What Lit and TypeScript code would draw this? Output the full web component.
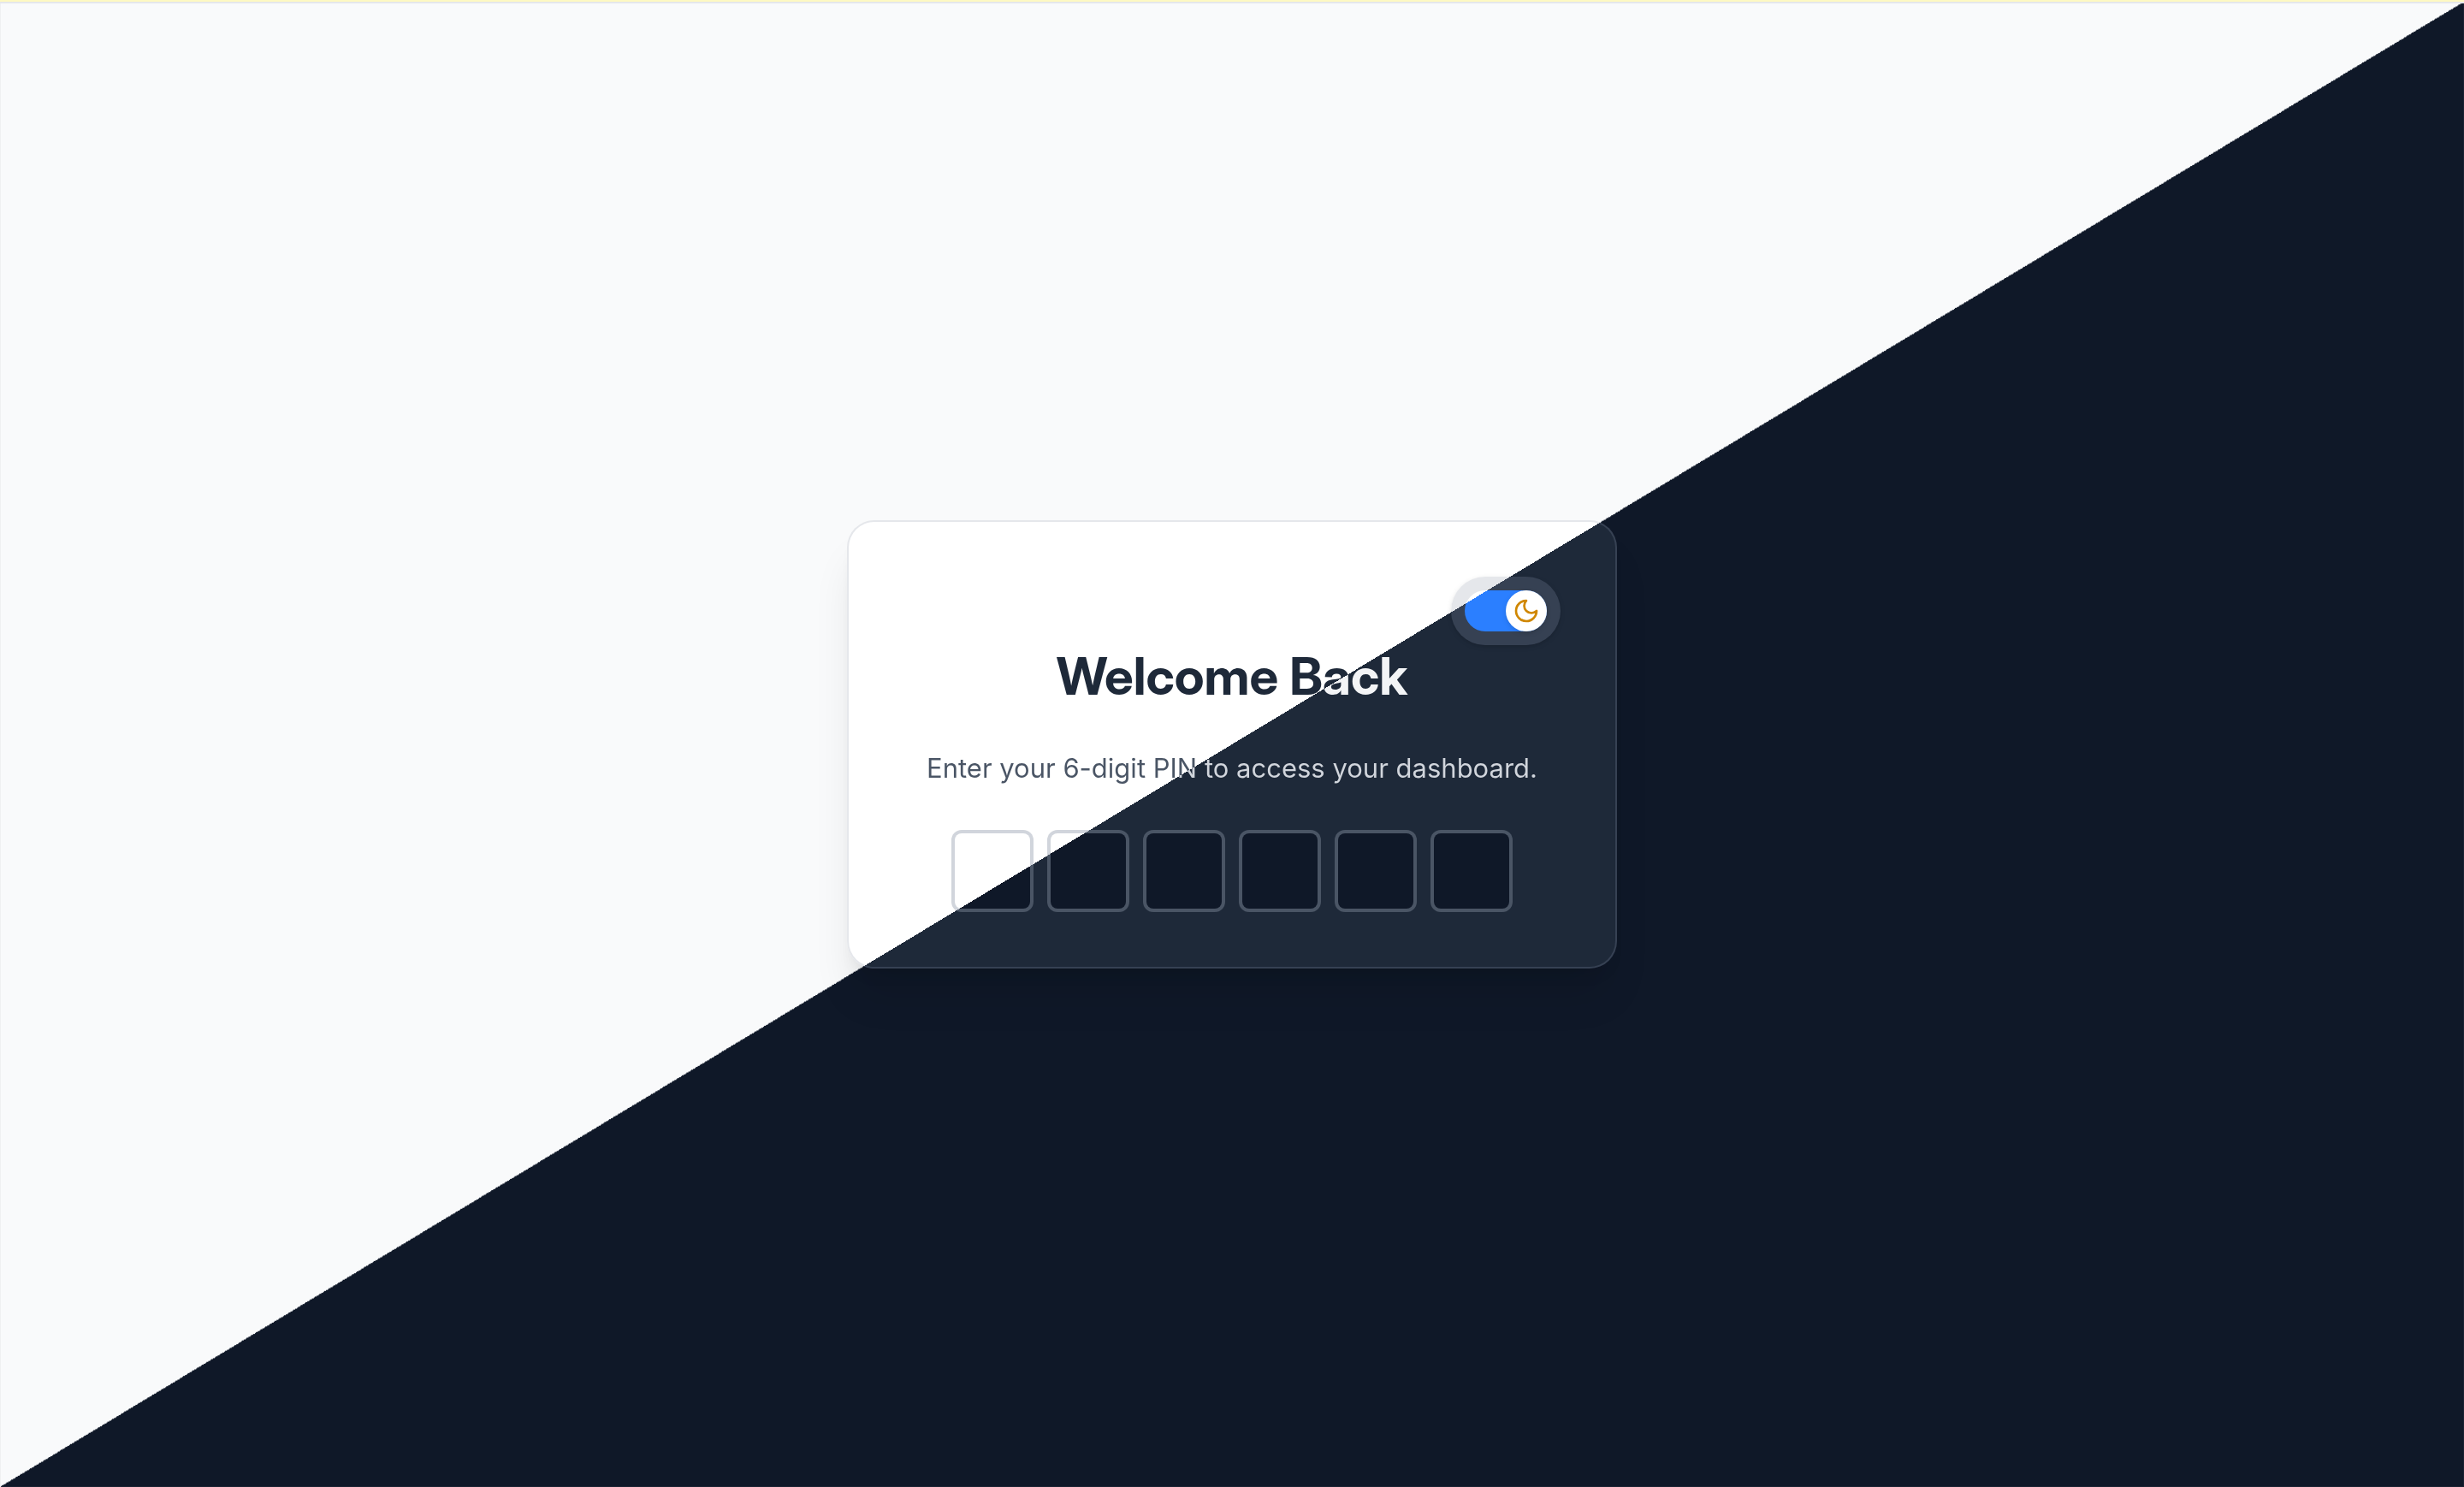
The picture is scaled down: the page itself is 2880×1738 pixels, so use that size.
import { LitElement, html, css, svg } from "lit";
import { customElement, property, state } from "lit/decorators.js";

const moon = svg`<path d="M12 3a6 6 0 0 0 9 9 9 9 0 1 1-9-9Z" />`;

@customElement("theme-toggle")
class ThemeToggle extends LitElement {
  @property({ type: Boolean, reflect: true }) dark = true;

  static styles = css`
    :host {
      display: inline-flex;
    }
    .pill {
      display: inline-flex;
      padding: 16px;
      border-radius: 40px;
      background: linear-gradient(to bottom right, #e5e7eb 50%, #364153 50%) 0 2px / 100vw calc(100vh - 2px) fixed;
      box-shadow: 0 2px 6px rgb(0 0 0 / 0.1), 0 2px 4px -2px rgb(0 0 0 / 0.1);
    }
    .track {
      display: flex;
      justify-content: flex-end;
      width: 96px;
      height: 48px;
      padding: 0;
      border: 0;
      border-radius: 24px;
      background: linear-gradient(to bottom right, #ffffff 50%, #2b7fff 50%) 0 2px / 100vw calc(100vh - 2px) fixed;
      cursor: pointer;
    }
    .knob {
      display: grid;
      place-items: center;
      width: 48px;
      height: 48px;
      border-radius: 50%;
      background: #ffffff;
      box-shadow: 0 2px 6px rgb(0 0 0 / 0.1), 0 2px 4px -2px rgb(0 0 0 / 0.1);
    }
    .icon {
      width: 32px;
      height: 32px;
      fill: none;
      stroke: #d08700;
      stroke-width: 2;
      stroke-linecap: round;
      stroke-linejoin: round;
    }
  `;

  render() {
    return html`
      <div class="pill">
        <button
          class="track"
          type="button"
          role="switch"
          aria-label="Dark mode"
          aria-checked=${this.dark ? "true" : "false"}
          @click=${() => (this.dark = !this.dark)}
        >
          <span class="knob">
            <svg class="icon" viewBox="0 0 24 24" aria-hidden="true">${moon}</svg>
          </span>
        </button>
      </div>
    `;
  }
}

@customElement("app-root")
class AppRoot extends LitElement {
  @state() private pin: string[] = Array(6).fill("");

  /* Every two-tone surface paints the same viewport-fixed diagonal. */
  static styles = css`
    :host {
      display: block;
      font-family: Inter, "Liberation Sans", sans-serif;
    }
    .page {
      box-sizing: border-box;
      min-height: 100vh;
      display: grid;
      place-items: center;
      border-top: 2px solid #fef9c2;
      background:
        linear-gradient(#e5e7eb, #e5e7eb) 0 0 / 100% 2px no-repeat padding-box,
        linear-gradient(to bottom right, #f9fafb 50%, #0f1828 50%) 0 2px / 100vw calc(100vh - 2px) fixed;
    }
    .card {
      box-sizing: border-box;
      width: min(900px, 100%);
      padding: 64px;
      display: flex;
      flex-direction: column;
      border: 2px solid transparent;
      border-radius: 32px;
      background:
        linear-gradient(to bottom right, #ffffff 50%, #1e2939 50%) 0 2px / 100vw calc(100vh - 2px) fixed padding-box,
        linear-gradient(to bottom right, #e5e7eb 50%, #364153 50%) 0 2px / 100vw calc(100vh - 2px) fixed border-box;
      box-shadow: 0 40px 50px -10px rgb(0 0 0 / 0.1), 0 16px 20px -12px rgb(0 0 0 / 0.1);
    }
    .toolbar {
      display: flex;
      justify-content: flex-end;
    }
    .title,
    .hint {
      margin: 0 0 48px;
      text-align: center;
      color: transparent;
    }
    .title {
      font-family: "Inter Display", Inter, "Liberation Sans", sans-serif;
      font-size: 60px;
      line-height: 72px;
      font-weight: 700;
      background: linear-gradient(to bottom right, #1e2939 50%, #f3f4f6 50%) 0 2px / 100vw calc(100vh - 2px) fixed text;
    }
    .hint {
      font-size: 31px;
      line-height: 48px;
      background: linear-gradient(to bottom right, #4a5565 50%, #d1d5dc 50%) 0 2px / 100vw calc(100vh - 2px) fixed text;
    }
    .pin {
      display: flex;
      justify-content: center;
      gap: 16px;
      margin: 0;
      padding: 0;
      border: 0;
    }
    .digit {
      box-sizing: border-box;
      width: 96px;
      height: 96px;
      padding: 0;
      border: 4px solid transparent;
      border-radius: 12px;
      font: 600 48px Inter, "Liberation Sans", sans-serif;
      text-align: center;
      color: #f3f4f6;
      outline: none;
      background:
        linear-gradient(to bottom right, #ffffff 50%, #0f1828 50%) 0 2px / 100vw calc(100vh - 2px) fixed padding-box,
        linear-gradient(to bottom right, #d1d5dc 50%, #4a5565 50%) 0 2px / 100vw calc(100vh - 2px) fixed border-box;
    }
  `;

  private onInput(index: number, event: Event) {
    const input = event.target as HTMLInputElement;
    input.value = input.value.replace(/\D/g, "");
    this.pin = this.pin.map((d, i) => (i === index ? input.value : d));
    if (input.value) {
      (input.nextElementSibling as HTMLInputElement | null)?.focus();
    }
  }

  render() {
    return html`
      <main class="page">
        <section class="card">
          <div class="toolbar"><theme-toggle></theme-toggle></div>
          <h1 class="title">Welcome Back</h1>
          <p class="hint" id="hint">Enter your 6-digit PIN to access your dashboard.</p>
          <fieldset class="pin" aria-labelledby="hint">
            ${this.pin.map(
              (digit, i) => html`<input
                class="digit"
                type="password"
                inputmode="numeric"
                maxlength="1"
                autocomplete="off"
                aria-label=${`Digit ${i + 1}`}
                .value=${digit}
                @input=${(e: Event) => this.onInput(i, e)}
              />`
            )}
          </fieldset>
        </section>
      </main>
    `;
  }
}
